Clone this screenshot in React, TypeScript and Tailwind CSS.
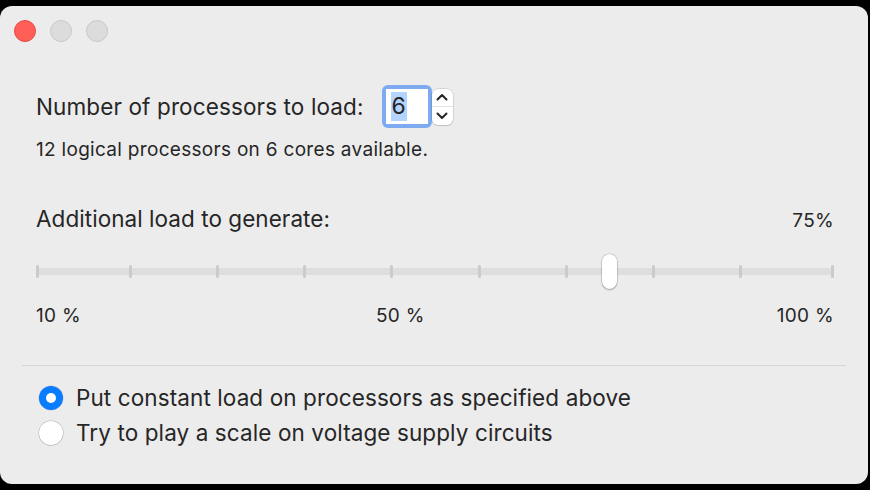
import React from "react";

const ticks = [37, 130, 217, 304, 391, 479, 566, 653, 740, 832];

function TrafficLights() {
  return (
    <div className="flex items-center gap-[14px] pl-[14px] pt-[14px]">
      <span className="h-[22px] w-[22px] rounded-full bg-[#ff5f57] border border-[#e9473f]" />
      <span className="h-[22px] w-[22px] rounded-full bg-[#dcdcdc] border border-[#c9c9c9]" />
      <span className="h-[22px] w-[22px] rounded-full bg-[#dcdcdc] border border-[#c9c9c9]" />
    </div>
  );
}

function Stepper() {
  return (
    <div className="flex h-[36px] w-[21px] flex-col overflow-hidden rounded-[6px] bg-white shadow-[0_0_0_0.5px_rgba(0,0,0,0.18),0_1px_1px_rgba(0,0,0,0.12)]">
      <div className="flex flex-1 items-center justify-center border-b border-[#e2e2e2]">
        <svg width="12" height="8" viewBox="0 0 12 8" fill="none">
          <path d="M1.5 6.5 L6 2 L10.5 6.5" stroke="#262626" strokeWidth="2" strokeLinecap="round" strokeLinejoin="round" />
        </svg>
      </div>
      <div className="flex flex-1 items-center justify-center">
        <svg width="12" height="8" viewBox="0 0 12 8" fill="none">
          <path d="M1.5 1.5 L6 6 L10.5 1.5" stroke="#262626" strokeWidth="2" strokeLinecap="round" strokeLinejoin="round" />
        </svg>
      </div>
    </div>
  );
}

function Slider() {
  return (
    <div className="relative h-[40px] w-full">
      <div className="absolute left-[0px] right-[0px] top-[14px] h-[7px] rounded-full bg-[#dedede]" />
      {ticks.map((x) => (
        <span
          key={x}
          className="absolute top-[11px] h-[13px] w-[3px] rounded-full bg-[#cbcbcb]"
          style={{ left: x - 36 - 1.5 }}
        />
      ))}
      <span
        className="absolute top-[0px] h-[35px] w-[15px] rounded-full bg-white shadow-[0_0_0_0.5px_rgba(0,0,0,0.2),0_1px_2px_rgba(0,0,0,0.25)]"
        style={{ left: 609 - 36 - 7.5 }}
      />
    </div>
  );
}

export default function App() {
  return (
    <div className="h-[490px] w-[870px] bg-black pt-[6px]" style={{ fontFamily: "Inter, 'Noto Sans', sans-serif" }}>
      <div className="flex h-[478px] w-[868px] flex-col rounded-[12px] bg-[#ececec] text-[#262626]">
        <TrafficLights />

        <div className="flex flex-col pl-[36px] pr-[34px] pt-[43px]">
          <div className="flex items-center">
            <span className="text-[22.5px] leading-[28px] tracking-[0.12px]">Number of processors to load:</span>
            <div className="ml-[18px] flex items-center">
              <div className="rounded-[6px] bg-[#7eaaf2] p-[4px]">
                <div className="flex h-[35px] w-[42px] items-center bg-white pl-[5px]">
                  <span className="bg-[#b3d4fd] px-[1px] text-[23px] leading-[29px]">6</span>
                </div>
              </div>
              <Stepper />
            </div>
          </div>
          <p className="mt-[11px] text-[19px] leading-[22px] tracking-[0.3px]">12 logical processors on 6 cores available.</p>

          <div className="mt-[44px] flex items-baseline justify-between">
            <span className="text-[22.5px] leading-[28px] tracking-[0.05px]">Additional load to generate:</span>
            <span className="text-[19px] leading-[22px] tracking-[0.3px]">75%</span>
          </div>

          <div className="mt-[21px] pr-[2px]">
            <Slider />
          </div>

          <div className="mt-[11px] flex text-[19px] leading-[22px] tracking-[0.3px]">
            <span className="w-[340px]">10 %</span>
            <span>50 %</span>
            <span className="ml-auto">100 %</span>
          </div>
        </div>

        <div className="mx-[22px] mt-[38px] h-px bg-[#d6d6d6]" />

        <div className="flex flex-col gap-[7px] px-[39px] pt-[18px]">
          <label className="flex items-center gap-[13px]">
            <span className="flex h-[24px] w-[24px] items-center justify-center rounded-full bg-[#0a7cff] shadow-[0_0_0_0.5px_rgba(0,0,0,0.15)]">
              <span className="h-[10px] w-[10px] rounded-full bg-white" />
            </span>
            <span className="text-[22.5px] leading-[28px] tracking-[0.1px]">Put constant load on processors as specified above</span>
          </label>
          <label className="flex items-center gap-[13px]">
            <span className="h-[24px] w-[24px] rounded-full bg-white shadow-[0_0_0_0.5px_rgba(0,0,0,0.25),0_1px_1px_rgba(0,0,0,0.08)]" />
            <span className="text-[22.5px] leading-[28px] tracking-[0.1px]">Try to play a scale on voltage supply circuits</span>
          </label>
        </div>
      </div>
    </div>
  );
}
